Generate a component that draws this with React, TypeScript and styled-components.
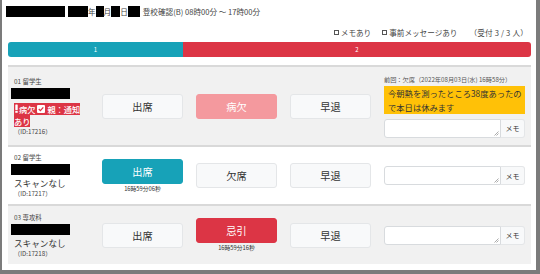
import React from "react";
import styled, { createGlobalStyle } from "styled-components";

const Global = createGlobalStyle`
  html, body { margin: 0; padding: 0; background: #fff; }
  body { font-family: "Noto Sans CJK JP", "Noto Sans", sans-serif; color: #333; }
  * { box-sizing: border-box; }
`;

const Frame = styled.div`
  width: 540px;
  height: 274px;
  border-left: 2px solid #7b7b7b;
  border-right: 4px solid #7b7b7b;
  border-bottom: 4px solid #7b7b7b;
  background: #fff;
  padding: 5px 5px 0 6px;
  overflow: hidden;
`;

const TitleLine = styled.div`
  display: flex;
  align-items: center;
  height: 12px;
  margin-left: -2px;
  font-size: 7.6px;
  color: #444;
  white-space: nowrap;
`;

const Mask = styled.span<{ $w: number; $h?: number }>`
  display: inline-block;
  width: ${(p) => p.$w}px;
  height: ${(p) => p.$h ?? 11}px;
  background: #000;
`;

const Gap = styled.span<{ $w: number }>`
  display: inline-block;
  width: ${(p) => p.$w}px;
`;

const FilterLine = styled.div`
  display: flex;
  justify-content: flex-end;
  align-items: center;
  height: 10px;
  margin-top: 10px;
  font-size: 7.6px;
  color: #444;
  white-space: nowrap;
`;

const Check = styled.label`
  display: inline-flex;
  align-items: center;
  margin-right: 11px;
`;

const Box = styled.span`
  display: inline-block;
  width: 5px;
  height: 5px;
  border: 0.8px solid #555;
  margin-right: 2px;
`;

const Counter = styled.span`
  margin-left: 1px;
  margin-right: 3px;
  letter-spacing: 0.2px;
`;

const Bar = styled.div`
  display: flex;
  height: 15px;
  margin-top: 5px;
  width: 523px;
  border-radius: 3px;
  overflow: hidden;
`;

const Segment = styled.div<{ $bg: string; $w: number }>`
  width: ${(p) => p.$w}px;
  background: ${(p) => p.$bg};
  color: #fff;
  font-size: 6px;
  display: flex;
  align-items: center;
  justify-content: center;
`;

const List = styled.div`
  margin-top: 8px;
  width: 523px;
`;

const Row = styled.div<{ $gray: boolean; $h: number }>`
  display: grid;
  grid-template-columns: 78px 81px 81px 81px 141px;
  column-gap: 13px;
  align-items: center;
  height: ${(p) => p.$h}px;
  padding-left: 3px;
  background: ${(p) => (p.$gray ? "#f1f1f1" : "#fff")};
  border-top: 2px solid #d9d9d9;
`;

const NameCol = styled.div`
  display: flex;
  flex-direction: column;
  align-items: flex-start;
`;

const ClassLabel = styled.div`
  font-size: 6.4px;
  color: #444;
  padding-left: 3px;
  line-height: 9px;
`;

const NameMask = styled.div`
  width: 59px;
  height: 11px;
  background: #000;
  margin-top: 2px;
`;

const Badge = styled.div`
  margin: 4px 0 0 3px;
  display: flex;
  flex-direction: column;
  align-items: flex-start;
  color: #fff;
  font-size: 8.2px;
  line-height: 12px;
  font-weight: 500;
`;

const BadgeLine = styled.div`
  display: flex;
  align-items: center;
  white-space: nowrap;
  background: #dc3545;
`;

const BadgeIcon = styled.svg`
  display: block;
  flex: none;
`;

const ScanText = styled.div`
  font-size: 8.6px;
  color: #333;
  line-height: 12px;
  margin-top: 2px;
  padding-left: 3px;
`;

const IdText = styled.div`
  font-size: 6.2px;
  color: #444;
  line-height: 9px;
  padding-left: 3px;
`;

const BtnStack = styled.div`
  display: flex;
  flex-direction: column;
  align-items: center;
`;

type Variant = "light" | "teal" | "red" | "pale";

const Btn = styled.div<{ $v: Variant }>`
  width: 81px;
  height: 25px;
  display: flex;
  align-items: center;
  justify-content: center;
  border-radius: 3px;
  font-size: 10.2px;
  border: 1px solid
    ${(p) =>
      p.$v === "light" ? "#e4e6e8" : p.$v === "teal" ? "#17a2b8" : p.$v === "red" ? "#dc3545" : "#f4999e"};
  background: ${(p) =>
    p.$v === "light" ? "#f8f9fa" : p.$v === "teal" ? "#17a2b8" : p.$v === "red" ? "#dc3545" : "#f4999e"};
  color: ${(p) => (p.$v === "light" ? "#333" : "#fff")};
`;

const Stamp = styled.div`
  font-size: 5.8px;
  color: #333;
  line-height: 8px;
  margin-top: 1px;
`;

const RightCol = styled.div`
  display: flex;
  flex-direction: column;
`;

const PrevText = styled.div`
  font-size: 6.2px;
  color: #555;
  line-height: 9px;
  white-space: nowrap;
`;

const Message = styled.div`
  background: #ffc107;
  color: #333;
  font-size: 8.3px;
  line-height: 14px;
  padding: 0 1px 0 4px;
  margin-top: 2px;
  height: 28px;
`;

const MemoGroup = styled.div<{ $mt: number }>`
  display: flex;
  height: 19px;
  margin-top: ${(p) => p.$mt}px;
`;

const Area = styled.div`
  position: relative;
  width: 117px;
  height: 100%;
  background: #fff;
  border: 1px solid #d8dbde;
  border-radius: 3px 0 0 3px;
`;

const Grip = styled.svg`
  position: absolute;
  right: 1px;
  bottom: 1px;
`;

const MemoBtn = styled.div`
  width: 24px;
  height: 100%;
  display: flex;
  align-items: center;
  justify-content: center;
  font-size: 7px;
  color: #333;
  background: #f8f9fa;
  border: 1px solid #e4e6e8;
  border-left: none;
  border-radius: 0 3px 3px 0;
`;

const Memo = () => (
  <>
    <Area>
      <Grip width="5" height="5" viewBox="0 0 5 5">
        <path d="M4.5 0.5 L0.5 4.5 M4.5 2.5 L2.5 4.5" stroke="#888" strokeWidth="0.7" />
      </Grip>
    </Area>
    <MemoBtn>メモ</MemoBtn>
  </>
);

export default function App() {
  return (
    <>
      <Global />
      <Frame>
        <TitleLine>
          <Mask $w={59} />
          <Gap $w={3} />
          <Mask $w={20} />
          年<Mask $w={8} />月<Mask $w={9} />日<Mask $w={12} />
          <Gap $w={3} />
          登校確認(B) 08時00分 ～ 17時00分
        </TitleLine>
        <FilterLine>
          <Check>
            <Box />
            メモあり
          </Check>
          <Check>
            <Box />
            事前メッセージあり
          </Check>
          <Counter>（受付 3 / 3 人）</Counter>
        </FilterLine>
        <Bar>
          <Segment $bg="#17a2b8" $w={175}>1</Segment>
          <Segment $bg="#dc3545" $w={348}>2</Segment>
        </Bar>
        <List>
          <Row $gray={true} $h={80}>
            <NameCol>
              <ClassLabel>01 留学生</ClassLabel>
              <NameMask />
              <Badge>
                <BadgeLine>
                  <BadgeIcon width="5" height="9" viewBox="0 0 5 9">
                    <rect x="1.3" y="0.5" width="2.4" height="5.5" fill="#fff" rx="0.6" />
                    <rect x="1.3" y="6.8" width="2.4" height="2" fill="#fff" />
                  </BadgeIcon>
                  <span>病欠</span>
                  <Gap $w={2} />
                  <BadgeIcon width="8" height="8" viewBox="0 0 8 8">
                    <rect x="0" y="0" width="8" height="8" rx="1" fill="#fff" />
                    <path d="M1.8 4 L3.4 5.6 L6.3 2.4" stroke="#dc3545" strokeWidth="1.3" fill="none" />
                  </BadgeIcon>
                  <Gap $w={2} />
                  <span>親：通知</span>
                </BadgeLine>
                <BadgeLine>あり</BadgeLine>
              </Badge>
              <IdText>（ID:17216）</IdText>
            </NameCol>
            <Btn $v="light">出席</Btn>
            <Btn $v="pale">病欠</Btn>
            <Btn $v="light">早退</Btn>
            <RightCol>
              <PrevText>前回：欠席（2022年08月03日(水) 16時58分）</PrevText>
              <Message>今朝熱を測ったところ38度あったので本日は休みます</Message>
              <MemoGroup $mt={5}>
                <Memo />
              </MemoGroup>
            </RightCol>
          </Row>
          <Row $gray={false} $h={59}>
            <NameCol>
              <ClassLabel>02 留学生</ClassLabel>
              <NameMask />
              <ScanText>スキャンなし</ScanText>
              <IdText>（ID:17217）</IdText>
            </NameCol>
            <BtnStack>
              <Btn $v="teal">出席</Btn>
              <Stamp>16時59分06秒</Stamp>
            </BtnStack>
            <Btn $v="light">欠席</Btn>
            <Btn $v="light">早退</Btn>
            <RightCol>
              <MemoGroup $mt={0}>
                <Memo />
              </MemoGroup>
            </RightCol>
          </Row>
          <Row $gray={true} $h={60}>
            <NameCol>
              <ClassLabel>03 専攻科</ClassLabel>
              <NameMask />
              <ScanText>スキャンなし</ScanText>
              <IdText>（ID:17218）</IdText>
            </NameCol>
            <Btn $v="light">出席</Btn>
            <BtnStack>
              <Btn $v="red">忌引</Btn>
              <Stamp>16時59分16秒</Stamp>
            </BtnStack>
            <Btn $v="light">早退</Btn>
            <RightCol>
              <MemoGroup $mt={0}>
                <Memo />
              </MemoGroup>
            </RightCol>
          </Row>
        </List>
      </Frame>
    </>
  );
}
